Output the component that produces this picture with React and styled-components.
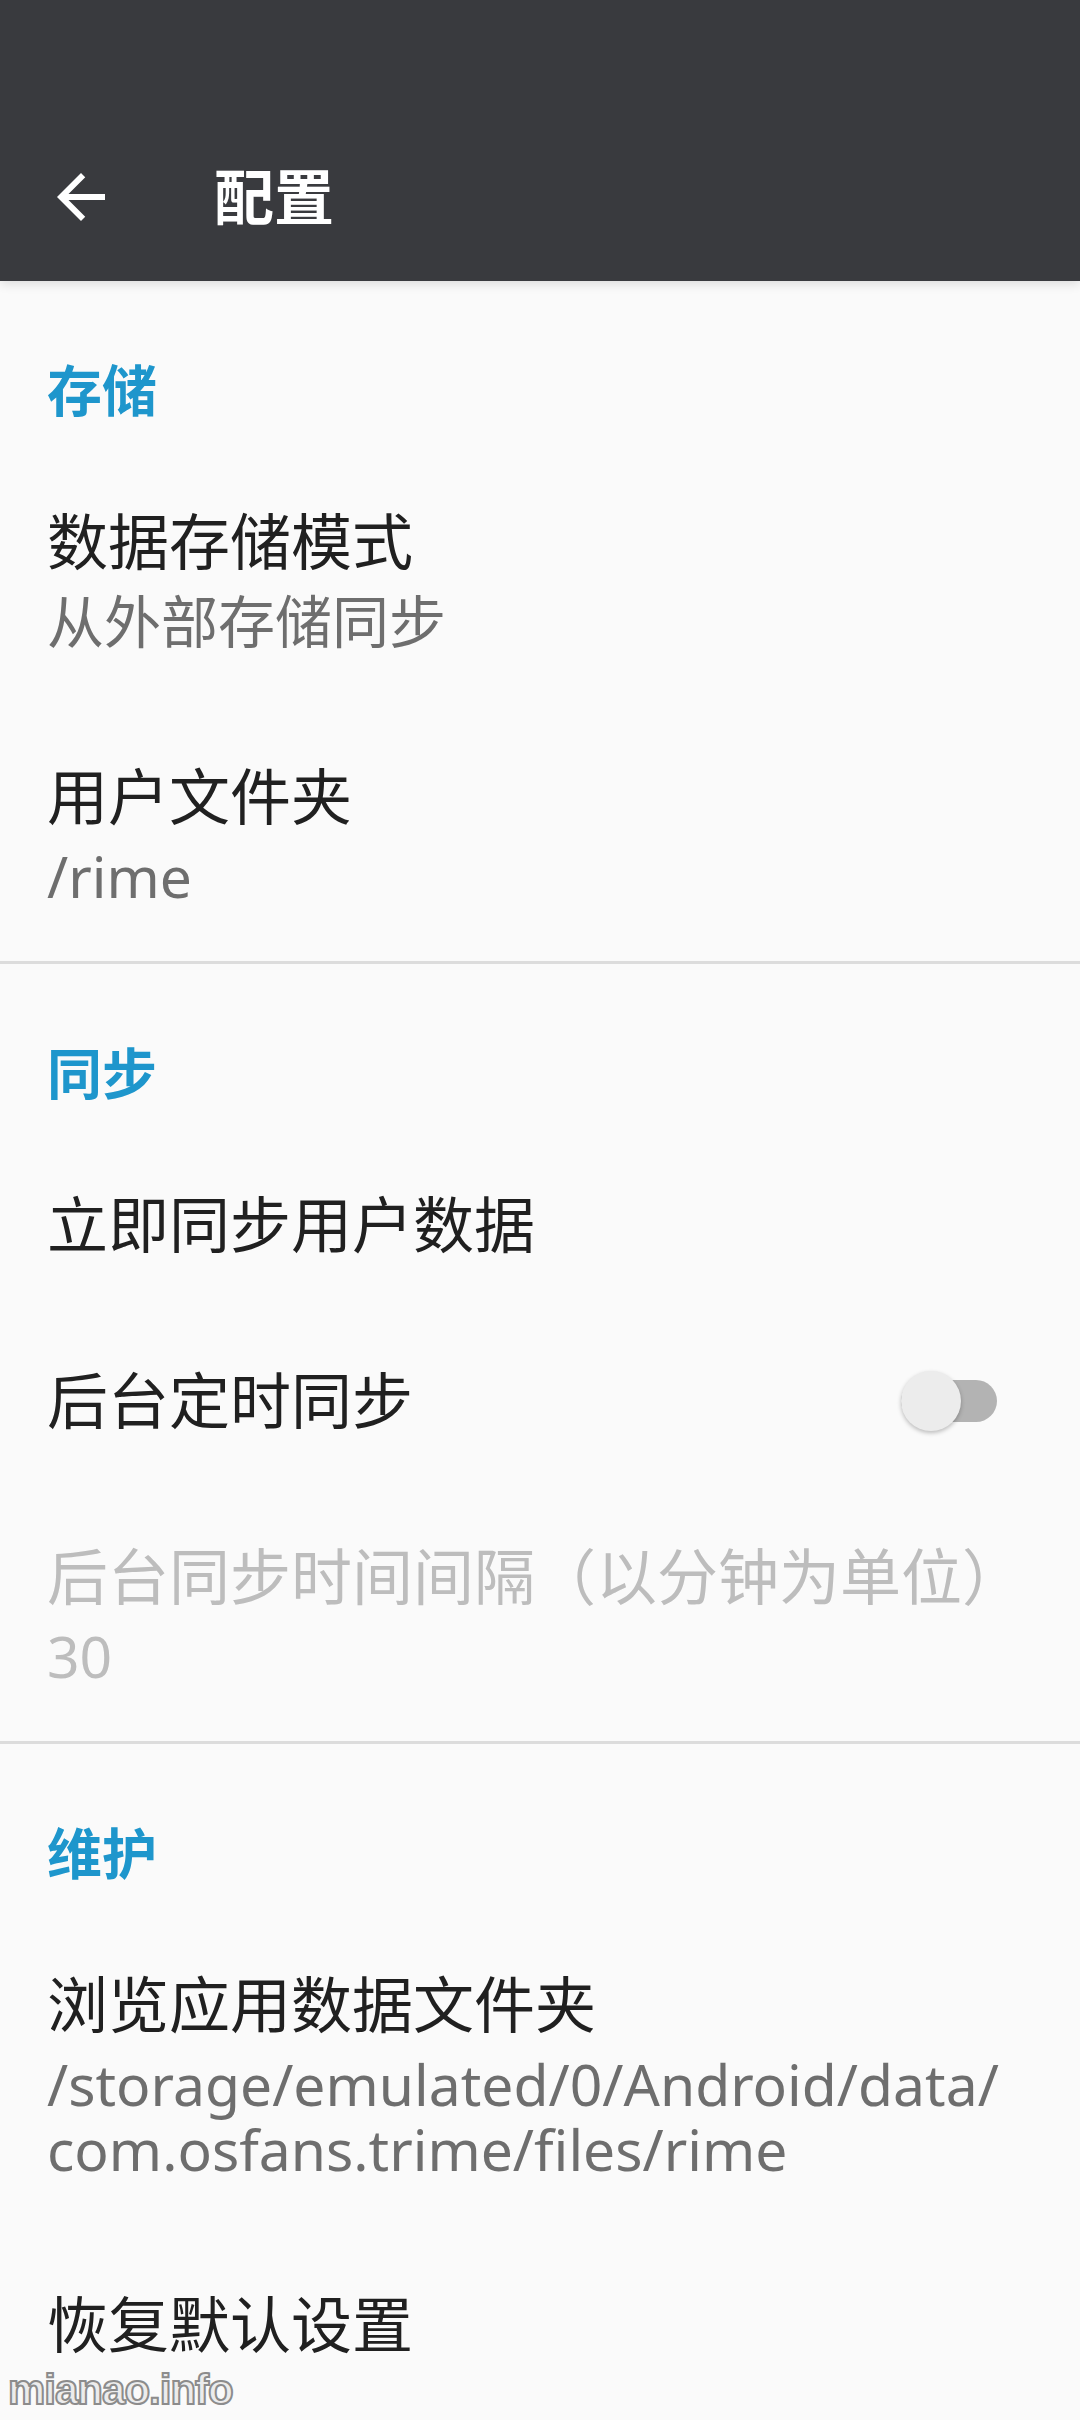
import React from 'react';
import styled, { createGlobalStyle } from 'styled-components';

const GlobalStyle = createGlobalStyle`
  body {
    margin: 0;
    background: #fafafa;
    font-family: "Noto Sans", "Noto Sans CJK SC", sans-serif;
  }
`;

// zero-width spaces after the slashes let the long path wrap after "data/"
const dataPath = ['/storage/', 'emulated/', '0/', 'Android/', 'data/', 'com.osfans.trime/', 'files/', 'rime'].join('\u200B');

const sections = [
  {
    title: '存储',
    items: [
      { title: '数据存储模式', summary: '从外部存储同步' },
      { title: '用户文件夹', summary: '/rime' },
    ],
  },
  {
    title: '同步',
    items: [
      { title: '立即同步用户数据' },
      { title: '后台定时同步', toggle: true },
      { title: '后台同步时间间隔（以分钟为单位）', summary: '30', disabled: true },
    ],
  },
  {
    title: '维护',
    items: [
      { title: '浏览应用数据文件夹', summary: dataPath },
      { title: '恢复默认设置' },
    ],
  },
];

function BackArrow() {
  return (
    <svg width="72" height="72" viewBox="0 0 24 24">
      <path fill="#fff" d="M20 11H7.83l5.59-5.59L12 4l-8 8 8 8 1.41-1.41L7.83 13H20v-2z" />
    </svg>
  );
}

function PrefItem({ item }) {
  return (
    <Item>
      <ItemText>
        <Title disabled={item.disabled}>{item.title}</Title>
        {item.summary && <SummaryText disabled={item.disabled}>{item.summary}</SummaryText>}
      </ItemText>
      {item.toggle && (
        <Switch>
          <Track />
          <Thumb />
        </Switch>
      )}
    </Item>
  );
}

export default function App() {
  return (
    <Page>
      <GlobalStyle />
      <Toolbar>
        <NavButton>
          <BackArrow />
        </NavButton>
        <ToolbarTitle>配置</ToolbarTitle>
      </Toolbar>
      {sections.map((section, i) => (
        <React.Fragment key={section.title}>
          {i > 0 && <Divider />}
          <Section>
            <SectionHeader>{section.title}</SectionHeader>
            {section.items.map(item => (
              <PrefItem key={item.title} item={item} />
            ))}
          </Section>
        </React.Fragment>
      ))}
      <Watermark>mianao.info</Watermark>
    </Page>
  );
}

const Page = styled.div`
  position: relative;
  height: 2420px;
  overflow: hidden;
  background: #fafafa;
`;

const Toolbar = styled.header`
  position: relative;
  z-index: 1;
  box-sizing: border-box;
  height: 281px;
  padding: 113px 0 0 45px;
  display: flex;
  align-items: center;
  background: #393a3e;
  box-shadow: 0 3px 10px rgba(0, 0, 0, 0.12);
`;

const NavButton = styled.div`
  width: 72px;
  height: 72px;
  display: flex;
`;

const ToolbarTitle = styled.h1`
  margin: 0 0 0 97px;
  color: #ffffff;
  font-size: 60px;
  font-weight: 700;
  line-height: 1;
`;

const Section = styled.section`
  display: flex;
  flex-direction: column;
`;

const SectionHeader = styled.div`
  padding: 71px 48px 26px 47px;
  font-size: 55px;
  font-weight: 700;
  line-height: 76px;
  color: #1e96cc;
`;

const Item = styled.div`
  display: flex;
  align-items: center;
  padding: 48px 48px 48px 47px;
`;

const ItemText = styled.div`
  flex: 1;
  min-width: 0;
`;

const Title = styled.div`
  font-size: 61px;
  line-height: 80px;
  color: ${p => (p.disabled ? '#bdbdbd' : '#202020')};
  white-space: nowrap;
`;

const SummaryText = styled.div`
  padding: 7px 0;
  font-size: 57px;
  line-height: 65px;
  color: ${p => (p.disabled ? '#bdbdbd' : '#6e6e6e')};
`;

const Switch = styled.div`
  position: relative;
  width: 96px;
  height: 60px;
  margin-right: 35px;
  flex: none;
`;

const Track = styled.div`
  position: absolute;
  left: 0;
  right: 0;
  top: 9px;
  height: 42px;
  border-radius: 21px;
  background: #b3b3b3;
`;

const Thumb = styled.div`
  position: absolute;
  left: 0;
  top: 0;
  width: 60px;
  height: 60px;
  border-radius: 50%;
  background: #ececec;
  box-shadow: 0 2px 4px rgba(0, 0, 0, 0.25);
`;

const Divider = styled.div`
  height: 3px;
  margin-top: -3px;
  background: #dcdcdc;
`;

const Watermark = styled.div`
  position: absolute;
  left: 8px;
  top: 2366px;
  font-family: "Liberation Sans", sans-serif;
  font-size: 42px;
  font-weight: 700;
  color: #ececec;
  -webkit-text-stroke: 2px #8c8c8c;
  letter-spacing: -1px;
`;
